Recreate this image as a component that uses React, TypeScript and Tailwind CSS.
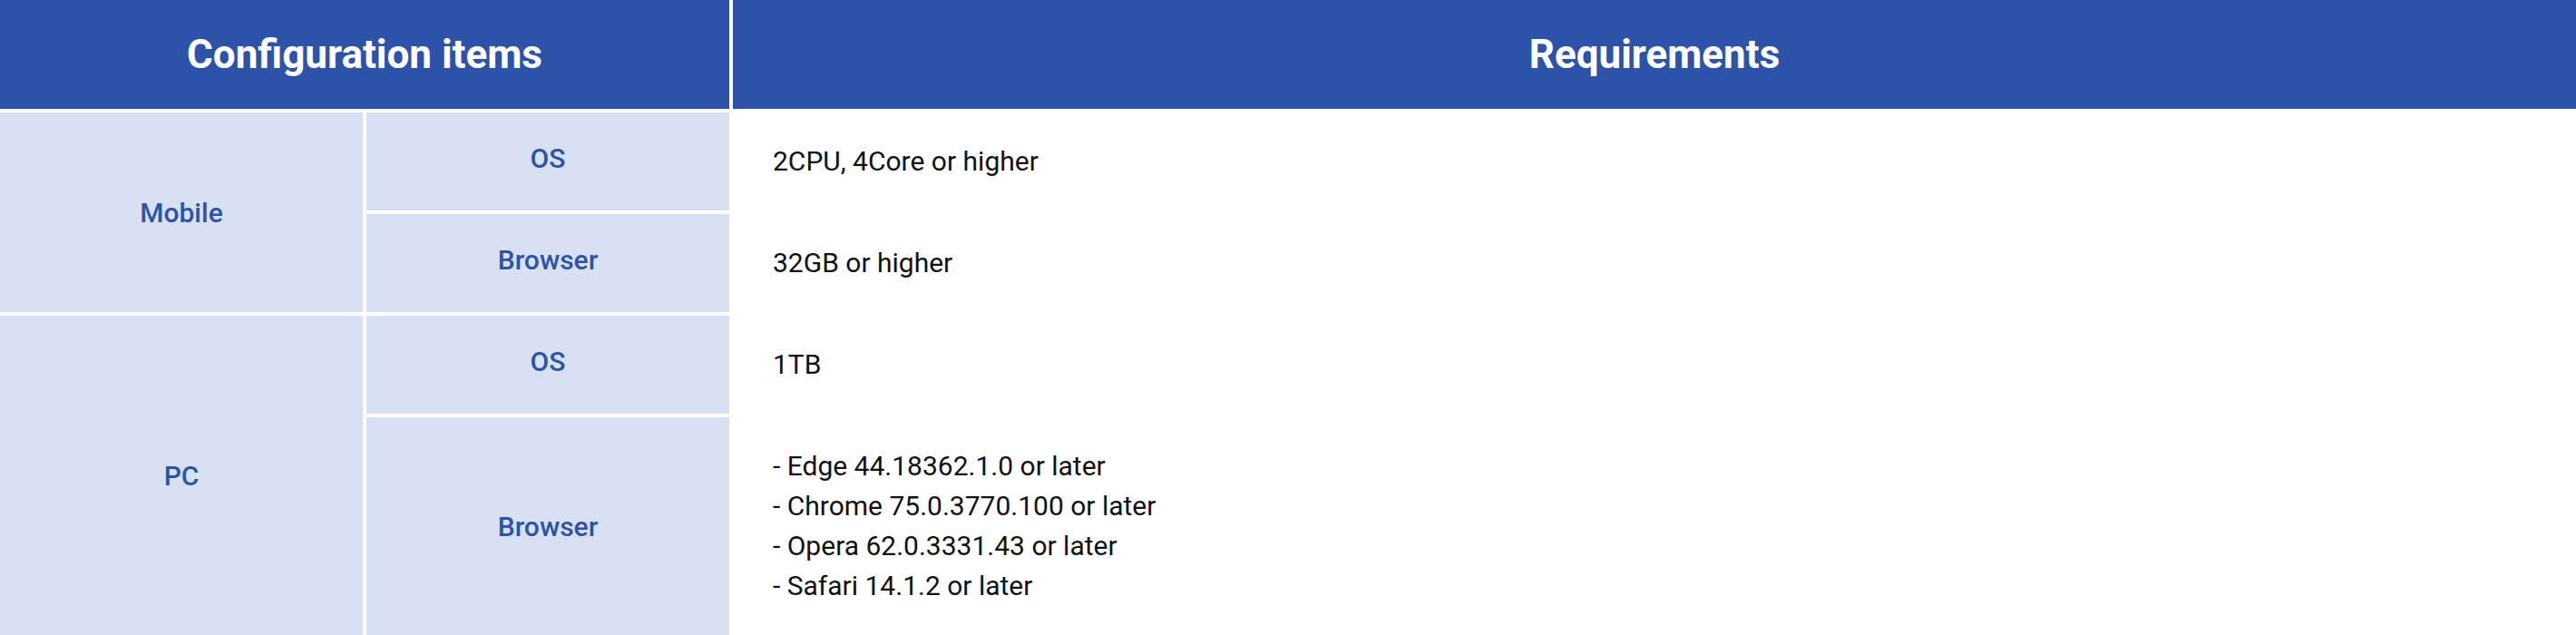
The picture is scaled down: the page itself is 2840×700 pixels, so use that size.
export default function App() {
  const head = "flex items-center justify-center bg-[#2d53a8] text-[44px] font-bold text-white";
  const label = "flex items-center justify-center bg-[#d8e0f3] text-[30px] font-medium text-[#2d53a8]";
  const req = "flex flex-col justify-center pl-[44px] text-[30px] leading-[44px] text-[#111]";

  return (
    <div
      className="grid h-[700px] w-[2840px] grid-cols-[400px_400px_1fr] grid-rows-[120px_108px_108px_108px_240px] gap-[4px] bg-white"
      style={{ fontFamily: "Roboto, 'Noto Sans', sans-serif" }}
    >
      <div className={`${head} col-span-2`}>Configuration items</div>
      <div className={head}>Requirements</div>

      <div className={`${label} row-span-2`}>Mobile</div>
      <div className={`${label} pb-[8px]`}>OS</div>
      <div className={req}>2CPU, 4Core or higher</div>
      <div className={`${label} pb-[8px]`}>Browser</div>
      <div className={req}>32GB or higher</div>

      <div className={`${label} row-span-2`}>PC</div>
      <div className={`${label} pb-[8px]`}>OS</div>
      <div className={req}>1TB</div>
      <div className={label}>Browser</div>
      <div className={req}>
        <p>- Edge 44.18362.1.0 or later</p>
        <p>- Chrome 75.0.3770.100 or later</p>
        <p>- Opera 62.0.3331.43 or later</p>
        <p>- Safari 14.1.2 or later</p>
      </div>
    </div>
  );
}
